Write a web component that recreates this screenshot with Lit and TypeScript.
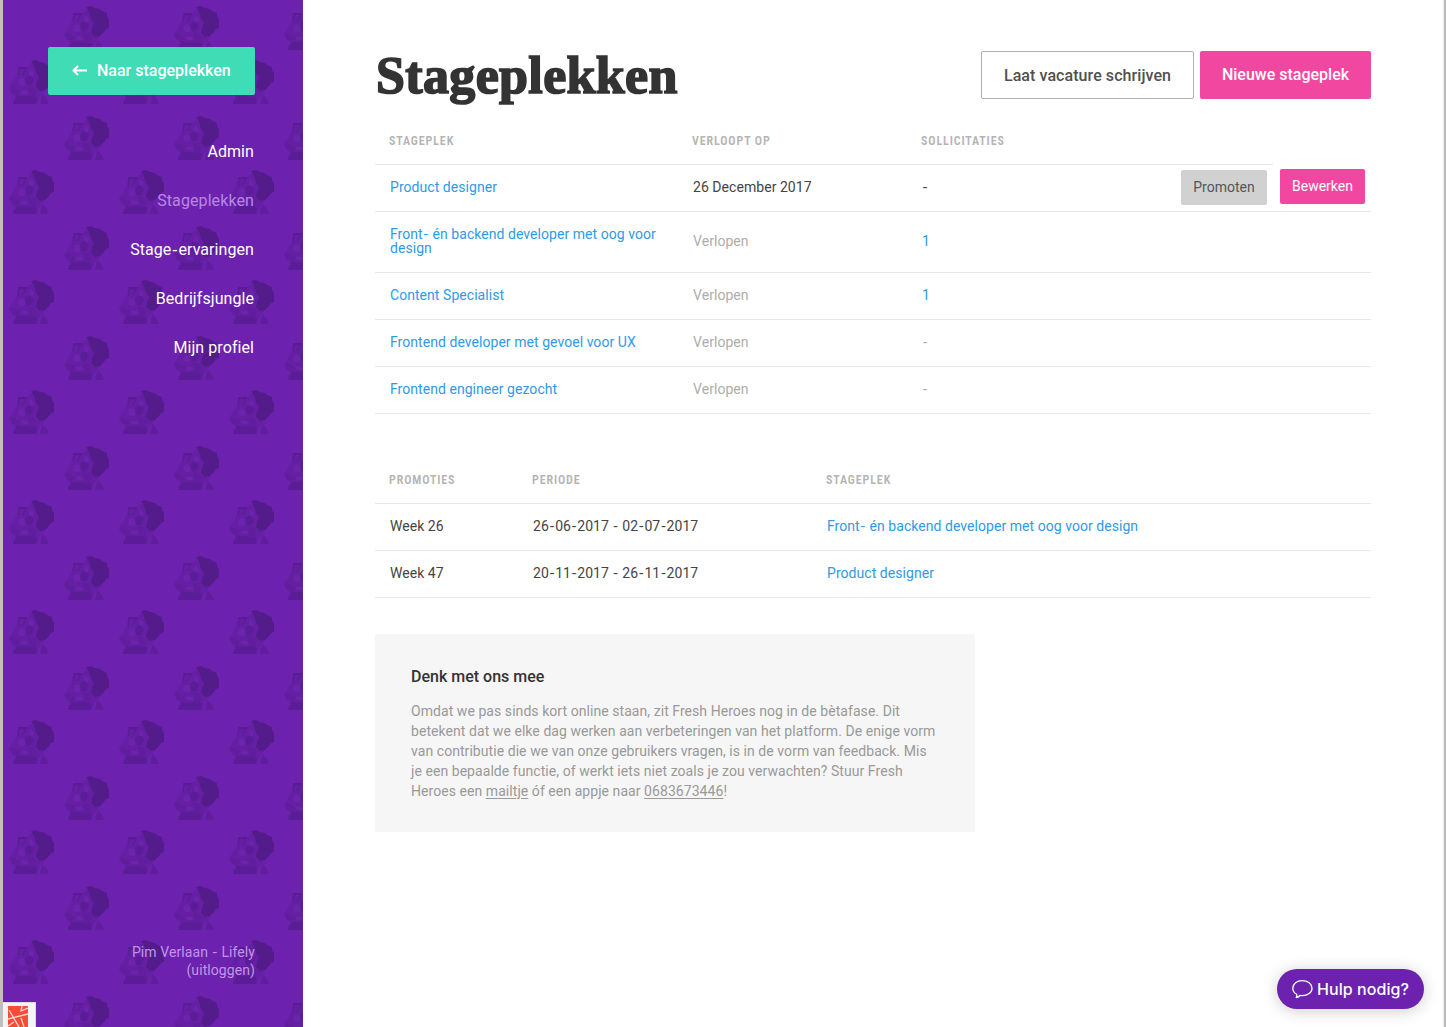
import { LitElement, html, svg, css } from "lit";
import { customElement, property } from "lit/decorators.js";

// Hyphens are set a little wider than the Roboto glyph.
const wide = (text: string) =>
  text.split("-").map((part, i) => (i ? html`<span class="hy">-</span>${part}` : part));

const hyphen = css`
  .hy { font-family: "DejaVu Sans", sans-serif; line-height: 0; padding: 0 0.6px; font-weight: 400; }
`;

@customElement("side-bar")
class SideBar extends LitElement {
  static styles = [hyphen, css`
    :host { display: flex; flex-direction: column; align-items: flex-end; position: relative; width: 300px; height: 1027px; box-sizing: border-box; padding: 47px 48px 0 0; background: #6c21af; overflow: hidden; flex: none; }
    .pattern { position: absolute; inset: 0; width: 300px; height: 1027px; }
    .back { position: relative; width: 207px; height: 48px; box-sizing: border-box; padding-left: 24px; border-radius: 2px; background: #3fdcb5; color: #fff; display: flex; align-items: center; font-weight: 500; font-size: 16px; line-height: 46px; padding-bottom: 1px; }
    .back svg { width: 15px; height: 12px; margin-right: 10px; }
    nav { position: relative; display: flex; flex-direction: column; align-items: flex-end; gap: 29px; margin: 47px 1px 0 0; color: #fff; font-size: 16px; line-height: 20px; letter-spacing: 0.07px; }
    .current { color: #b987e2; letter-spacing: 0.1px; }
    .user { position: relative; margin-top: auto; margin-bottom: 48px; text-align: right; color: #c195e6; font-size: 14px; line-height: 18px; letter-spacing: 0.08px; }
    .badge { position: absolute; left: 0; bottom: 0; width: 33px; height: 25px; box-sizing: border-box; border: 1px solid #dcdcdc; border-width: 1px 1px 0 0; background: #f4f4f4; }
    .badge svg { display: block; margin: 3px 0 0 5px; width: 20px; height: 21px; }
  `];
  private face(x: number, y: number) {
    return svg`<g transform=${`translate(${x} ${y})`}>
      <path fill="#651fa4" d="M9 8L18 7L23 3L29 12L31 25L37 29L34 33L31 36L28 44H5L7 36L3 34L0 29L1 26L4 22L6 18L8 15Z"/>
      <path fill="#6c24ae" d="M10 20q3-3 6 0q1 3 0 5q-3 2-6 0q-1-2 0-5z M21 9l4 4-2 4-3-3z M12 31q5-1 8 2q-4 2-8 0z"/>
      <path fill="#541b8b" d="M22 1L27 0L31 2L36 3L38 5L43 7L43 10L45 13V22L42 23L40 26L36 30L31 31L27 27L28 22L30 17L27 13L25 6Z"/>
      <path fill="#5b1c97" d="M6 35q9 2 18 0l4 3-1 6H4l1-5h2z"/>
      <path fill="#601e9e" d="M0 28q3-2 6 0t6 3l-3 4-6-1zM18 27q7-2 10 4l-2 6h-5zM33 34q5 3 7 10h-9z"/>
      <path fill="#5b1c97" d="M16 20q1-6 6-4t1 8q-4 3-6 0z"/>
      <path fill="none" stroke="#571b91" stroke-width="1.8" d="M9 8h9"/>
      <path fill="none" stroke="#5b1c97" stroke-width="1.4" d="M11 9q-3 3-1 7M16 9q0 4-3 6"/>
    </g>`;
  }
  render() {
    return html`
      <svg class="pattern">
        <defs><pattern id="heads" width="110" height="110" patternUnits="userSpaceOnUse">
          ${this.face(61, 6)}${this.face(6, 60)}
        </pattern></defs>
        <rect width="300" height="1027" fill="url(#heads)" />
      </svg>
      <div class="back">
        <svg viewBox="0 0 15 12" fill="none" stroke="#fff" stroke-width="1.9"><path d="M15 5.500H2M6 1L1.500 5.500L6 10" /></svg>
        Naar stageplekken
      </div>
      <nav>
        <span>Admin</span><span class="current">Stageplekken</span><span>${wide("Stage-ervaringen")}</span>
        <span>Bedrijfsjungle</span><span>Mijn profiel</span>
      </nav>
      <div class="user">${wide("Pim Verlaan - Lifely")}<br />(uitloggen)</div>
      <div class="badge">
        <svg viewBox="0 0 20 21"><rect width="20" height="21" fill="#fb4b37" />
          <path d="M1 4l10 17M0 13l20-5M14 0l-1 5 7-3M13 12l3 9M0 20l6-4" fill="none" stroke="#ffd9d2" stroke-width="1.3" /></svg>
      </div>`;
  }
}

@customElement("data-table")
class DataTable extends LitElement {
  @property({ attribute: false }) heads: string[] = [];
  @property({ attribute: false }) rows: { cells: string[]; kinds: string[]; actions?: boolean }[] = [];
  @property() columns = "";
  @property({ type: Boolean }) short = false;
  static styles = [hyphen, css`
    :host { display: block; font-size: 14px; line-height: 14px; color: #444; }
    .row { display: grid; align-items: center; box-sizing: border-box; border-bottom: 1px solid #e8e8e8; }
    .cell { padding: 15px 15px 17px; letter-spacing: 0.05px; }
    .head { font-size: 12px; font-weight: 600; font-stretch: 75%; color: #b4b4b4; text-transform: uppercase; }
    .head .cell { padding: 16px 14px; letter-spacing: 0.88px; white-space: nowrap; }
    .head.short { width: 898px; }
    .link { color: #2f9ae8; }
    .muted { color: #adadad; }
    .actions { display: flex; gap: 13px; justify-content: flex-end; padding: 0 6px 2px 0; height: 36px; }
    .btn { height: 35px; box-sizing: border-box; border-radius: 2px; line-height: 34px; text-align: center; }
    .promote { width: 86px; margin-top: 1px; background: #d1d1d1; color: #555; }
    .edit { width: 85px; background: #f147a1; color: #fff; }
  `];
  render() {
    const grid = `grid-template-columns:${this.columns}`;
    return html`
      <div class="row head ${this.short ? "short" : ""}" style=${grid}>${this.heads.map((h) => html`<div class="cell">${h}</div>`)}</div>
      ${this.rows.map((r) => html`<div class="row" style=${grid}>
        ${r.cells.map((c, i) => html`<div class="cell ${r.kinds[i]}">${wide(c)}</div>`)}
        ${r.actions ? html`<div class="actions"><span class="btn promote">Promoten</span><span class="btn edit">Bewerken</span></div>` : ""}
      </div>`)}`;
  }
}

@customElement("app-root")
class AppRoot extends LitElement {
  static styles = css`
    :host { display: flex; position: relative; box-sizing: border-box; width: 1446px; height: 1027px; overflow: hidden; background: #fff; border-left: 3px solid #c0c0c0; border-right: 2px solid #bababa; font-family: Roboto, "Liberation Sans", sans-serif; color: #444; box-shadow: inset -1px 0 #eee; }
    main { width: 996px; margin-left: 72px; }
    header { display: flex; align-items: flex-start; height: 118px; box-sizing: border-box; padding-top: 51px; }
    h1 { flex: 1; margin: -5px 0 0 1px; font: 700 52px/60px "Liberation Serif", serif; color: #333; letter-spacing: 0.35px; -webkit-text-stroke: 1.7px #333; }
    .big { height: 48px; box-sizing: border-box; border-radius: 2px; font-weight: 500; font-size: 16px; text-align: center; }
    .ghost { width: 213px; margin-right: 6px; border: 1px solid #b0b0b0; line-height: 47px; color: #505050; letter-spacing: 0.07px; }
    .primary { width: 171px; background: #f147a1; color: #fff; line-height: 47px; }
    .second { margin-top: 43px; }
    .note { width: 600px; height: 198px; box-sizing: border-box; margin-top: 36px; padding: 33px 36px; background: #f6f6f6; border-radius: 2px; }
    h2 { margin: 0 0 14px; font-size: 16px; line-height: 20px; font-weight: 500; color: #333; }
    p { margin: 0; font-size: 14px; line-height: 20px; color: #999; white-space: nowrap; letter-spacing: 0.06px; }
    u { text-underline-offset: 2px; }
    .help { position: absolute; left: 1274px; top: 969px; width: 147px; height: 40px; box-sizing: border-box; padding: 0 0 0 15px; border-radius: 20px; background: #6c21af; color: #fff; display: flex; align-items: center; font: 500 16px/40px Inter, sans-serif; letter-spacing: 0.06px; box-shadow: 0 2px 16px rgba(0, 0, 0, 0.2); white-space: nowrap; }
    .help svg { width: 21px; height: 20px; margin-right: 4px; flex: none; }
  `;
  private jobs = [
    { cells: ["Product designer", "26 December 2017", "-"], kinds: ["link", "", ""], actions: true },
    { cells: ["Front- én backend developer met oog voor design", "Verlopen", "1"], kinds: ["link", "muted", "link"] },
    { cells: ["Content Specialist", "Verlopen", "1"], kinds: ["link", "muted", "link"] },
    { cells: ["Frontend developer met gevoel voor UX", "Verlopen", "-"], kinds: ["link", "muted", "muted"] },
    { cells: ["Frontend engineer gezocht", "Verlopen", "-"], kinds: ["link", "muted", "muted"] },
  ];
  private promos = [
    { cells: ["Week 26", "26-06-2017 - 02-07-2017", "Front- én backend developer met oog voor design"], kinds: ["", "", "link"] },
    { cells: ["Week 47", "20-11-2017 - 26-11-2017", "Product designer"], kinds: ["", "", "link"] },
  ];
  render() {
    return html`
      <side-bar></side-bar>
      <main>
        <header>
          <h1>Stageplekken</h1>
          <div class="big ghost">Laat vacature schrijven</div>
          <div class="big primary">Nieuwe stageplek</div>
        </header>
        <data-table short columns="303px 229px 200px 1fr" .heads=${["Stageplek", "Verloopt op", "Sollicitaties"]} .rows=${this.jobs}></data-table>
        <data-table class="second" columns="143px 294px 1fr" .heads=${["Promoties", "Periode", "Stageplek"]} .rows=${this.promos}></data-table>
        <section class="note">
          <h2>Denk met ons mee</h2>
          <p>Omdat we pas sinds kort online staan, zit Fresh Heroes nog in de bètafase. Dit<br />betekent dat we elke dag werken aan verbeteringen van het platform. De enige vorm<br />van contributie die we van onze gebruikers vragen, is in de vorm van feedback. Mis<br />je een bepaalde functie, of werkt iets niet zoals je zou verwachten? Stuur Fresh<br />Heroes een <u>mailtje</u> óf een appje naar <u>0683673446</u>!</p>
        </section>
      </main>
      <div class="help">
        <svg viewBox="0 0 21 20" fill="none" stroke="#fff" stroke-width="1.3" stroke-linejoin="round"><path d="M4.6 15.2C2 13.8 .8 11.6 .8 9.2C.8 4.8 5 1.6 10.3 1.6S20 4.8 20 9.2S15.6 16.6 10.3 16.6C9.5 16.6 8.8 16.55 8 16.4C7.2 17.8 5.8 18.4 4.2 18.5C5 17.6 5.2 16.4 4.6 15.2Z" /></svg>
        Hulp nodig?
      </div>`;
  }
}
